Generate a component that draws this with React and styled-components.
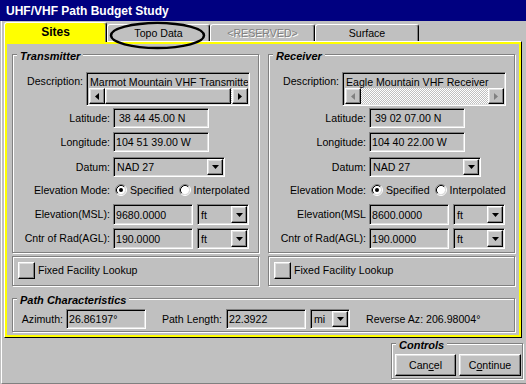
import React from 'react';
import styled, { createGlobalStyle, css } from 'styled-components';

const Global = createGlobalStyle`
  html, body { margin: 0; padding: 0; background: #c0c0c0; }
  body { font-family: "Liberation Sans", Arial, sans-serif; }
`;

const raised = css`
  box-sizing: border-box;
  border: 1px solid;
  border-color: #fff #000 #000 #fff;
  box-shadow: inset -1px -1px 0 #808080, inset 1px 1px 0 #dfdfdf;
  background: #c0c0c0;
`;

const sunken = css`
  box-sizing: border-box;
  border: 1px solid;
  border-color: #808080 #fff #fff #808080;
  box-shadow: inset 1px 1px 0 #000, inset -1px -1px 0 #dfdfdf;
  background: #c0c0c0;
`;

const Window = styled.div`
  position: relative;
  width: 526px;
  height: 384px;
  background: #c0c0c0;
  display: flex;
  flex-direction: column;
  font-family: "Liberation Sans", Arial, sans-serif;
  font-size: 10.6px;
  color: #000;
  overflow: hidden;
`;

const TitleBar = styled.div`
  height: 21px;
  flex: none;
  box-sizing: border-box;
  background: #000080;
  color: #fff;
  font-weight: bold;
  font-size: 12px;
  line-height: 18px;
  padding: 2px 0 0 6px;
  white-space: nowrap;
`;

const Body = styled.div`
  flex: 1;
  display: flex;
  flex-direction: column;
  margin-left: 1px;
  border-left: 1px solid #fff;
  border-bottom: 1px solid #808080;
  padding: 0 3px 0 2px;
`;

const TabRow = styled.div`
  height: 20px;
  display: flex;
  align-items: flex-end;
  flex: none;
`;

const Tab = styled.div`
  position: relative;
  box-sizing: border-box;
  width: ${p => p.$w}px;
  height: ${p => (p.$active ? 20 : 17)}px;
  margin-bottom: ${p => (p.$active ? -1 : 0)}px;
  z-index: ${p => (p.$active ? 2 : 1)};
  background: ${p => (p.$active ? '#ffff00' : '#c0c0c0')};
  border-top: 1px solid #fff;
  border-left: 1px solid #fff;
  border-right: 1px solid #000;
  border-radius: 3px 3px 0 0;
  box-shadow: inset -1px 0 0 #808080;
  display: flex;
  align-items: center;
  justify-content: center;
  padding-bottom: ${p => (p.$active ? 2 : 0)}px;
  font-size: ${p => (p.$active ? '12px' : '10.6px')};
  font-weight: ${p => (p.$active ? 'bold' : 'normal')};
  color: ${p => (p.$disabled ? '#808080' : '#000')};
  text-shadow: ${p => (p.$disabled ? '1px 1px 0 #fff' : 'none')};
  white-space: nowrap;
`;

const Panel = styled.div`
  box-sizing: border-box;
  width: 518px;
  height: 297px;
  flex: none;
  border: 1px solid;
  border-color: #fff #000 #000 #fff;
  box-shadow: inset 0 0 0 2px #ffff00;
  padding: 12px 6px 5px 7px;
  display: flex;
  flex-direction: column;
`;

const Columns = styled.div`
  display: grid;
  grid-template-columns: 247px 247px;
  column-gap: 9px;
`;

const Column = styled.div`
  display: flex;
  flex-direction: column;
  gap: 3px;
`;

const etched = css`
  box-sizing: border-box;
  border: 1px solid #808080;
  box-shadow: inset 1px 1px 0 #fff, 1px 1px 0 #fff;
`;

const Group = styled.div`
  ${etched};
  position: relative;
  height: ${p => p.$h}px;
  width: ${p => (p.$w ? `${p.$w}px` : 'auto')};
  padding: ${p => p.$pad};
  display: flex;
  flex-direction: ${p => p.$dir || 'column'};
  align-items: ${p => p.$align || 'stretch'};
  margin-top: ${p => p.$mt || 0}px;
  align-self: ${p => p.$self || 'auto'};
`;

const Legend = styled.span`
  position: absolute;
  top: -5px;
  left: 4px;
  padding: 0 3px;
  background: #c0c0c0;
  font-size: 11px;
  font-weight: bold;
  font-style: italic;
  line-height: 13px;
  white-space: nowrap;
`;

const Row = styled.div`
  display: flex;
  align-items: ${p => p.$align || 'center'};
  height: ${p => p.$h}px;
  margin-top: ${p => p.$mt || 0}px;
  flex: none;
`;

const Label = styled.span`
  flex: none;
  width: ${p => (p.$w ? `${p.$w}px` : 'auto')};
  text-align: right;
  white-space: nowrap;
  margin-right: ${p => (p.$gap ?? 3)}px;
  margin-left: ${p => p.$ml || 0}px;
  padding-top: ${p => p.$pt || 0}px;
  line-height: 13px;
`;

const Field = styled.div`
  ${sunken};
  flex: none;
  width: ${p => p.$w}px;
  height: ${p => p.$h || 20}px;
  margin-left: ${p => p.$ml || 0}px;
  padding: 0 2px;
  display: flex;
  align-items: center;
  white-space: pre;
  overflow: hidden;
`;

const Select = styled.div`
  ${sunken};
  flex: none;
  width: ${p => p.$w}px;
  height: ${p => p.$h || 20}px;
  margin-left: ${p => p.$ml || 0}px;
  padding: 1px;
  display: flex;
  align-items: stretch;
`;

const SelText = styled.span`
  flex: 1;
  padding-left: 2px;
  display: flex;
  align-items: center;
  white-space: nowrap;
`;

const DropBtn = styled.div`
  ${raised};
  width: 16px;
  flex: none;
  display: flex;
  align-items: center;
  justify-content: center;
`;

const DescBox = styled.div`
  ${sunken};
  width: 164px;
  height: 34px;
  padding: 2px 1px 1px 2px;
  display: flex;
  flex-direction: column;
  overflow: hidden;
`;

const DescText = styled.div`
  height: 15px;
  line-height: 13px;
  padding-top: 1px;
  box-sizing: border-box;
  padding-left: 1px;
  white-space: nowrap;
  overflow: hidden;
`;

const ScrollBar = styled.div`
  height: 16px;
  display: flex;
  flex: none;
  background: repeating-conic-gradient(#ffffff 0 25%, #c0c0c0 0 50%) 0 0 / 2px 2px;
`;

const ScrollBtn = styled.div`
  ${raised};
  width: 16px;
  height: 16px;
  flex: none;
  display: flex;
  align-items: center;
  justify-content: center;
`;

const Thumb = styled.div`
  ${raised};
  flex: none;
  width: ${p => p.$w}px;
  height: 16px;
`;

const Track = styled.div`
  flex: 1;
`;

const RadioGroup = styled.div`
  display: flex;
  align-items: center;
  margin-left: 2px;
  white-space: nowrap;
`;

const RadioText = styled.span`
  margin: 0 5px 0 3px;
`;

const FixedBox = styled.div`
  ${etched};
  height: 30px;
  display: flex;
  align-items: center;
  padding: 0 0 2px 5px;
`;

const CheckBox = styled.div`
  ${raised};
  width: 17px;
  height: 17px;
  flex: none;
  margin-right: 3px;
`;

const PlainText = styled.span`
  white-space: nowrap;
  margin-left: ${p => p.$ml || 0}px;
`;

const Buttons = styled.div`
  display: flex;
  gap: 3px;
`;

const Button = styled.div`
  ${raised};
  width: ${p => p.$w}px;
  height: 22px;
  display: flex;
  align-items: center;
  justify-content: center;
  font-size: 10.6px;
`;

const Overlay = styled.svg`
  position: absolute;
  left: 108px;
  top: 21px;
  pointer-events: none;
  z-index: 5;
`;

const DownArrow = () => (
  <svg width="7" height="4" viewBox="0 0 7 4">
    <polygon points="0,0 7,0 3.5,4" fill="#000" />
  </svg>
);

const SideArrow = ({ dir, color = '#000' }) => (
  <svg width="4" height="7" viewBox="0 0 4 7">
    {dir === 'left' ? (
      <polygon points="4,0 4,7 0,3.5" fill={color} />
    ) : (
      <polygon points="0,0 0,7 4,3.5" fill={color} />
    )}
  </svg>
);

const Radio = ({ checked }) => (
  <svg width="12" height="12" viewBox="0 0 12 12" style={{ flex: 'none' }}>
    <circle cx="6" cy="6" r="4.2" fill="#fff" />
    <path d="M2.11 9.89 A5.5 5.5 0 0 1 9.89 2.11" stroke="#808080" fill="none" />
    <path d="M2.82 9.18 A4.5 4.5 0 0 1 9.18 2.82" stroke="#000" fill="none" />
    <path d="M9.89 2.11 A5.5 5.5 0 0 1 2.11 9.89" stroke="#fff" fill="none" />
    <path d="M9.18 2.82 A4.5 4.5 0 0 1 2.82 9.18" stroke="#dfdfdf" fill="none" />
    {checked && <circle cx="6" cy="6" r="2" fill="#000" />}
  </svg>
);

function SiteGroup({ title, desc, lat, lon, elev, elevLabel, disabledScroll }) {
  return (
    <Column>
      <Group $h={199} $pad="17px 0 0 0">
        <Legend>{title}</Legend>
        <Row $h={34} $align="flex-start">
          <Label $w={70} $gap={3} $pt={3}>Description:</Label>
          <DescBox>
            <DescText>{desc}</DescText>
            <ScrollBar>
              <ScrollBtn>
                <SideArrow dir="left" color={disabledScroll ? '#808080' : '#000'} />
              </ScrollBtn>
              {disabledScroll ? <Track /> : <><Thumb $w={126} /><Track /></>}
              <ScrollBtn>
                <SideArrow dir="right" color={disabledScroll ? '#808080' : '#000'} />
              </ScrollBtn>
            </ScrollBar>
          </DescBox>
        </Row>
        <Row $h={20} $mt={2}>
          <Label $w={97}>Latitude:</Label>
          <Field $w={96}>{lat}</Field>
        </Row>
        <Row $h={20} $mt={4}>
          <Label $w={97}>Longitude:</Label>
          <Field $w={96}>{lon}</Field>
        </Row>
        <Row $h={20} $mt={5}>
          <Label $w={97}>Datum:</Label>
          <Select $w={112}>
            <SelText>NAD 27</SelText>
            <DropBtn><DownArrow /></DropBtn>
          </Select>
        </Row>
        <Row $h={14} $mt={6}>
          <Label $w={97}>Elevation Mode:</Label>
          <RadioGroup>
            <Radio checked />
            <RadioText>Specified</RadioText>
            <Radio />
            <RadioText>Interpolated</RadioText>
          </RadioGroup>
        </Row>
        <Row $h={21} $mt={7}>
          <Label $w={97}>{elevLabel}</Label>
          <Field $w={80} $h={21}>{elev}</Field>
          <Select $w={52} $h={21} $ml={4}>
            <SelText>ft</SelText>
            <DropBtn><DownArrow /></DropBtn>
          </Select>
        </Row>
        <Row $h={21} $mt={3}>
          <Label $w={97}>Cntr of Rad(AGL):</Label>
          <Field $w={80} $h={21}>190.0000</Field>
          <Select $w={52} $h={21} $ml={4}>
            <SelText>ft</SelText>
            <DropBtn><DownArrow /></DropBtn>
          </Select>
        </Row>
      </Group>
      <FixedBox>
        <CheckBox />
        <PlainText>Fixed Facility Lookup</PlainText>
      </FixedBox>
    </Column>
  );
}

export default function App() {
  return (
    <Window>
      <Global />
      <TitleBar>UHF/VHF Path Budget Study</TitleBar>
      <Body>
        <TabRow>
          <Tab $active $w={103}>Sites</Tab>
          <Tab $w={103}>Topo Data</Tab>
          <Tab $w={105} $disabled>&lt;RESERVED&gt;</Tab>
          <Tab $w={104}>Surface</Tab>
        </TabRow>
        <Panel>
          <Columns>
            <SiteGroup
              title="Transmitter"
              desc="Marmot Mountain VHF Transmitter"
              lat=" 38 44 45.00 N"
              lon="104 51 39.00 W"
              elev="9680.0000"
              elevLabel="Elevation(MSL):"
            />
            <SiteGroup
              title="Receiver"
              desc="Eagle Mountain VHF Receiver"
              lat=" 39 02 07.00 N"
              lon="104 40 22.00 W"
              elev="8600.0000"
              elevLabel="Elevation(MSL"
              disabledScroll
            />
          </Columns>
          <Group $h={34} $mt={12} $dir="row" $align="center" $pad="8px 0 0 0">
            <Legend>Path Characteristics</Legend>
            <Label $w={50}>Azimuth:</Label>
            <Field $w={80}>26.86197°</Field>
            <Label $w={76} $gap={4}>Path Length:</Label>
            <Field $w={80}>22.3922</Field>
            <Select $w={40} $ml={4}>
              <SelText>mi</SelText>
              <DropBtn><DownArrow /></DropBtn>
            </Select>
            <PlainText $ml={16}>Reverse Az: 206.98004°</PlainText>
          </Group>
        </Panel>
        <Group $w={132} $h={36} $mt={5} $self="flex-end" $pad="10px 0 0 3px">
          <Legend>Controls</Legend>
          <Buttons>
            <Button $w={61}>Can<u>c</u>el</Button>
            <Button $w={62}>C<u>o</u>ntinue</Button>
          </Buttons>
        </Group>
      </Body>
      <Overlay width="100" height="30" viewBox="0 0 100 30">
        <ellipse cx="49.5" cy="14.5" rx="46.5" ry="12.5" fill="none" stroke="#000" strokeWidth="2.5" />
      </Overlay>
    </Window>
  );
}
